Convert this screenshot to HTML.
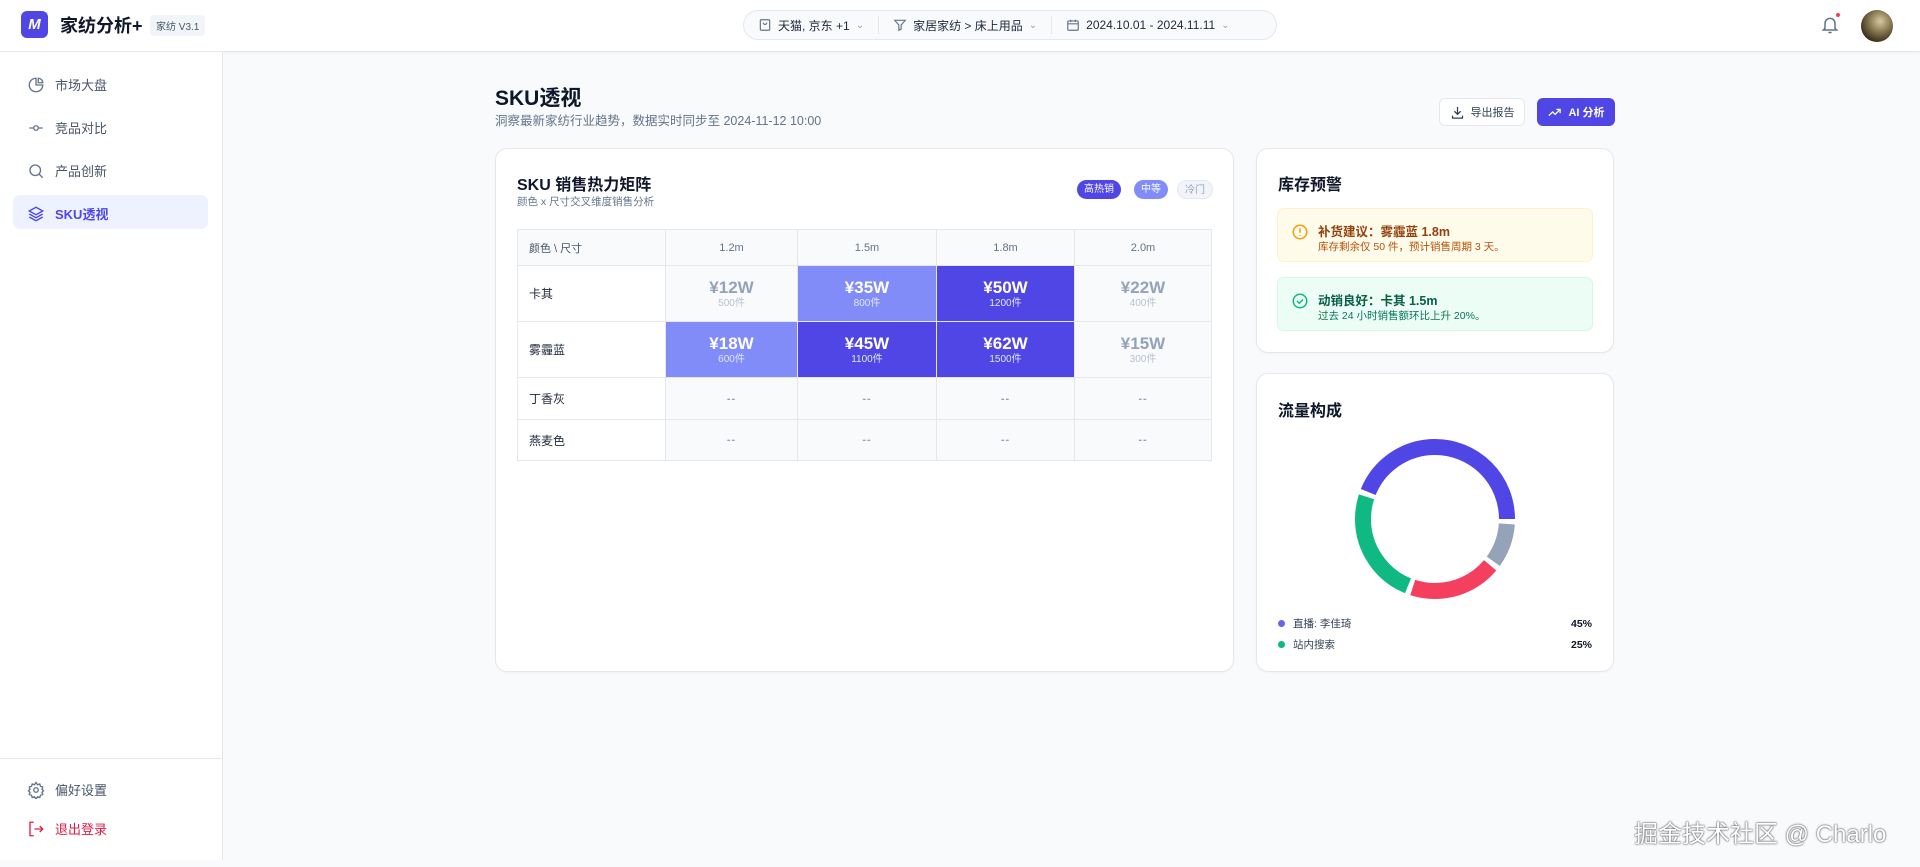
<!DOCTYPE html>
<html><head><meta charset="utf-8"><style>
*{box-sizing:border-box;margin:0;padding:0}
body{width:1920px;height:867px;overflow:hidden;background:#f8fafc;font-family:"Liberation Sans","Noto Sans CJK SC",sans-serif;color:#0f172a;position:relative}
.hdr{position:absolute;left:0;top:0;width:1920px;height:52px;background:#fff;border-bottom:1px solid #e5e7eb;box-shadow:0 1px 3px rgba(0,0,0,.04)}
.logo{position:absolute;left:21px;top:11px;width:27px;height:27px;border-radius:6px;background:#4f46e5;color:#fff;font-weight:bold;font-style:italic;font-size:15px;text-align:center;line-height:27px}
.brand{position:absolute;left:60px;top:12px;font-size:18px;font-weight:bold}
.ver{position:absolute;left:150px;top:15px;background:#f1f5f9;border-radius:4px;font-size:10px;color:#475569;padding:3px 6px}
.pill{position:absolute;left:743px;top:10px;width:534px;height:30px;border:1px solid #e2e8f0;border-radius:15px;background:#f8fafc;font-size:12px;color:#1e293b;display:flex;align-items:center}
.pill .seg{display:flex;align-items:center;gap:6px;padding:0 14px;height:18px}
.pill .seg+.seg{border-left:1px solid #e2e8f0}
.pill .chev{color:#94a3b8;font-size:10px}
.side{position:absolute;left:0;top:52px;width:223px;height:808px;background:#fff;border-right:1px solid #e5e7eb}
.nav{position:absolute;left:27px;font-size:13px;color:#475569;display:flex;align-items:center;gap:10px}
.act{position:absolute;left:13px;top:143px;width:195px;height:34px;background:#eef2ff;border-radius:7px}
.main h1{position:absolute;left:495px;top:82px;font-size:21px;font-weight:bold}
.sub{position:absolute;left:495px;top:110px;font-size:12.5px;color:#64748b}
.btn{position:absolute;top:98px;height:28px;border-radius:6px;font-size:11px;display:flex;align-items:center;justify-content:center;gap:6px}
.card{position:absolute;background:#fff;border:1px solid #e5e7eb;border-radius:12px;box-shadow:0 1px 2px rgba(0,0,0,.03)}
.ct{position:absolute;font-size:16px;font-weight:bold}
table{position:absolute;left:517px;top:229px;width:695px;border-collapse:collapse;font-size:11px}
td{border:1px solid #e5e7eb;text-align:center;color:#64748b}
td.l{text-align:left;padding-left:11px;color:#1e293b;font-size:12px}
.v{font-size:17px;font-weight:bold;line-height:19px}
.n{font-size:10px;line-height:13px}
.hi{background:#4f46e5;color:#fff}.mi{background:#818cf8;color:#fff}.lo{background:#f8fafc;color:#94a3b8}
.lo .n{color:#b8c2cf}.hi .n,.mi .n{color:#e0e7ff}
.dash{color:#94a3b8;font-weight:bold;letter-spacing:1px;background:#f8fafc}
.tag{position:absolute;top:180px;height:19px;border-radius:10px;font-size:10px;line-height:19px;padding:0 7px}
.al{position:absolute;left:1277px;width:316px;height:54px;border-radius:7px}
.al .t{position:absolute;left:40px;top:12px;font-size:12.5px;font-weight:bold}
.al .d{position:absolute;left:40px;top:30px;font-size:10.5px}
.al svg{position:absolute;left:13px;top:14px}
.lg{position:absolute;left:1278px;font-size:10.5px;color:#334155;display:flex;align-items:center;gap:8px;width:314px}
.lg b{margin-left:auto;color:#0f172a}
.wm{position:absolute;left:1634px;top:814px;font-size:24px;color:#fff;text-shadow:0 0 2px #555,0 0 1px #333;font-family:"Liberation Sans","Noto Sans CJK SC",sans-serif}
</style></head><body>
<div class="hdr">
 <div class="logo">M</div><div class="brand">家纺分析+</div><div class="ver">家纺 V3.1</div>
 <div class="pill">
  <div class="seg"><svg width="14" height="14" viewBox="0 0 24 24" fill="none" stroke="#64748b" stroke-width="2"><rect x="4" y="3" width="16" height="18" rx="2"/><path d="M9 8a3 3 0 0 0 6 0"/></svg>天猫, 京东 +1 <span class="chev">⌄</span></div>
  <div class="seg"><svg width="14" height="14" viewBox="0 0 24 24" fill="none" stroke="#64748b" stroke-width="2"><path d="M3 4h18l-7 8v7l-4 2v-9z"/></svg>家居家纺 &gt; 床上用品 <span class="chev">⌄</span></div>
  <div class="seg"><svg width="14" height="14" viewBox="0 0 24 24" fill="none" stroke="#64748b" stroke-width="2"><rect x="3" y="5" width="18" height="16" rx="2"/><path d="M3 10h18M8 3v4M16 3v4"/></svg>2024.10.01 - 2024.11.11 <span class="chev">⌄</span></div>
 </div>
 <svg style="position:absolute;left:1820px;top:14px" width="20" height="22" viewBox="0 0 24 24" fill="none" stroke="#64748b" stroke-width="1.8"><path d="M6 16V10a6 6 0 0 1 12 0v6l2 2H4z"/><path d="M10 21h4"/></svg>
 <div style="position:absolute;left:1836px;top:13px;width:4px;height:4px;border-radius:50%;background:#f43f5e"></div>
 <div style="position:absolute;left:1861px;top:10px;width:32px;height:32px;border-radius:50%;background:radial-gradient(circle at 60% 35%,#d8c9a0,#7a6a45 45%,#2b2416 80%)"></div>
</div>
<div class="side">
 <div class="act"></div>
 <div class="nav" style="top:23px"><svg width="18" height="18" viewBox="0 0 24 24" fill="none" stroke="#64748b" stroke-width="1.8"><path d="M21 12A9 9 0 1 1 12 3v9z"/><path d="M15 3a6 6 0 0 1 6 6h-6z"/></svg>市场大盘</div>
 <div class="nav" style="top:66px"><svg width="18" height="18" viewBox="0 0 24 24" fill="none" stroke="#64748b" stroke-width="1.8"><circle cx="12" cy="12" r="3"/><path d="M3 12h6M15 12h6"/></svg>竞品对比</div>
 <div class="nav" style="top:109px"><svg width="18" height="18" viewBox="0 0 24 24" fill="none" stroke="#64748b" stroke-width="1.8"><circle cx="11" cy="11" r="7"/><path d="M16 16l5 5"/></svg>产品创新</div>
 <div class="nav" style="top:152px;color:#4f46e5;font-weight:bold"><svg width="18" height="18" viewBox="0 0 24 24" fill="none" stroke="#4f46e5" stroke-width="1.8"><path d="M12 3l9 5-9 5-9-5z"/><path d="M3 12l9 5 9-5M3 16l9 5 9-5"/></svg>SKU透视</div>
 <div style="position:absolute;left:0;top:706px;width:222px;border-top:1px solid #e5e7eb"></div>
 <div class="nav" style="top:728px"><svg width="18" height="18" viewBox="0 0 24 24" fill="none" stroke="#64748b" stroke-width="1.8"><circle cx="12" cy="12" r="3"/><path d="M12 2l2 3 3-1 1 3 3 1-1 3 2 2-2 2 1 3-3 1-1 3-3-1-2 3-2-3-3 1-1-3-3-1 1-3-2-2 2-2-1-3 3-1 1-3 3 1z"/></svg>偏好设置</div>
 <div class="nav" style="top:767px;color:#e11d48"><svg width="18" height="18" viewBox="0 0 24 24" fill="none" stroke="#e11d48" stroke-width="1.8"><path d="M9 3H4v18h5M10 12h11M17 8l4 4-4 4"/></svg>退出登录</div>
</div>
<div class="main">
 <h1>SKU透视</h1>
 <div class="sub">洞察最新家纺行业趋势，数据实时同步至 2024-11-12 10:00</div>
 <div class="btn" style="left:1439px;width:86px;background:#fff;border:1px solid #e2e8f0;color:#334155"><svg width="15" height="15" viewBox="0 0 24 24" fill="none" stroke="#334155" stroke-width="2"><path d="M12 3v12M7 10l5 5 5-5M4 17v4h16v-4"/></svg>导出报告</div>
 <div class="btn" style="left:1537px;width:78px;background:#4f46e5;color:#fff;font-weight:bold"><svg width="15" height="15" viewBox="0 0 24 24" fill="none" stroke="#fff" stroke-width="2"><path d="M3 17l6-6 4 4 8-8M15 7h6v6"/></svg>AI 分析</div>

 <div class="card" style="left:495px;top:148px;width:739px;height:524px"></div>
 <div class="ct" style="left:517px;top:171px">SKU 销售热力矩阵</div>
 <div style="position:absolute;left:517px;top:194px;font-size:10.5px;color:#64748b">颜色 x 尺寸交叉维度销售分析</div>
 <div class="tag" style="left:1077px;background:#4f46e5;color:#fff">高热销</div>
 <div class="tag" style="left:1134px;background:#818cf8;color:#fff">中等</div>
 <div class="tag" style="left:1177px;background:#f1f5f9;color:#94a3b8;border:1px solid #e2e8f0">冷门</div>
 <table>
  <tr style="height:36px;background:#f8fafc"><td class="l" style="width:148px;color:#475569;font-size:11px">颜色 \ 尺寸</td><td style="width:132px">1.2m</td><td style="width:139px">1.5m</td><td style="width:138px">1.8m</td><td>2.0m</td></tr>
  <tr style="height:56px"><td class="l">卡其</td><td class="lo"><div class="v">¥12W</div><div class="n">500件</div></td><td class="mi"><div class="v">¥35W</div><div class="n">800件</div></td><td class="hi"><div class="v">¥50W</div><div class="n">1200件</div></td><td class="lo"><div class="v">¥22W</div><div class="n">400件</div></td></tr>
  <tr style="height:56px"><td class="l">雾霾蓝</td><td class="mi"><div class="v">¥18W</div><div class="n">600件</div></td><td class="hi"><div class="v">¥45W</div><div class="n">1100件</div></td><td class="hi"><div class="v">¥62W</div><div class="n">1500件</div></td><td class="lo"><div class="v">¥15W</div><div class="n">300件</div></td></tr>
  <tr style="height:42px"><td class="l">丁香灰</td><td class="dash">--</td><td class="dash">--</td><td class="dash">--</td><td class="dash">--</td></tr>
  <tr style="height:41px"><td class="l">燕麦色</td><td class="dash">--</td><td class="dash">--</td><td class="dash">--</td><td class="dash">--</td></tr>
 </table>

 <div class="card" style="left:1256px;top:148px;width:358px;height:205px"></div>
 <div class="ct" style="left:1278px;top:171px">库存预警</div>
 <div class="al" style="top:208px;background:#fffbeb;border:1px solid #fef3c7">
  <svg width="18" height="18" viewBox="0 0 24 24" fill="none" stroke="#f59e0b" stroke-width="2"><circle cx="12" cy="12" r="9"/><path d="M12 7v6M12 16v1"/></svg>
  <div class="t" style="color:#92400e">补货建议：雾霾蓝 1.8m</div><div class="d" style="color:#b45309">库存剩余仅 50 件，预计销售周期 3 天。</div></div>
 <div class="al" style="top:277px;background:#ecfdf5;border:1px solid #d1fae5">
  <svg width="18" height="18" viewBox="0 0 24 24" fill="none" stroke="#10b981" stroke-width="2"><circle cx="12" cy="12" r="9"/><path d="M8 12l3 3 5-5"/></svg>
  <div class="t" style="color:#065f46">动销良好：卡其 1.5m</div><div class="d" style="color:#047857">过去 24 小时销售额环比上升 20%。</div></div>

 <div class="card" style="left:1256px;top:373px;width:358px;height:299px"></div>
 <div class="ct" style="left:1278px;top:397px">流量构成</div>
 <svg style="position:absolute;left:1355px;top:439px" width="160" height="160" viewBox="0 0 160 160">
  <g fill="none" stroke-width="16">
   <circle cx="80" cy="80" r="72" stroke="#94a3b8" stroke-dasharray="40.2 1000" stroke-dashoffset="-5"/>
   <circle cx="80" cy="80" r="72" stroke="#f43f5e" stroke-dasharray="85.4 1000" stroke-dashoffset="-50.3"/>
   <circle cx="80" cy="80" r="72" stroke="#10b981" stroke-dasharray="108 1000" stroke-dashoffset="-140.7"/>
   <circle cx="80" cy="80" r="72" stroke="#4f46e5" stroke-dasharray="198.5 1000" stroke-dashoffset="-253.8"/>
  </g>
 </svg>
 <div class="lg" style="top:616px"><span style="width:7px;height:7px;border-radius:50%;background:#6366f1"></span>直播: 李佳琦<b>45%</b></div>
 <div class="lg" style="top:637px"><span style="width:7px;height:7px;border-radius:50%;background:#10b981"></span>站内搜索<b>25%</b></div>
</div>
<div class="wm">掘金技术社区 @ Charlo</div>
</body></html>
